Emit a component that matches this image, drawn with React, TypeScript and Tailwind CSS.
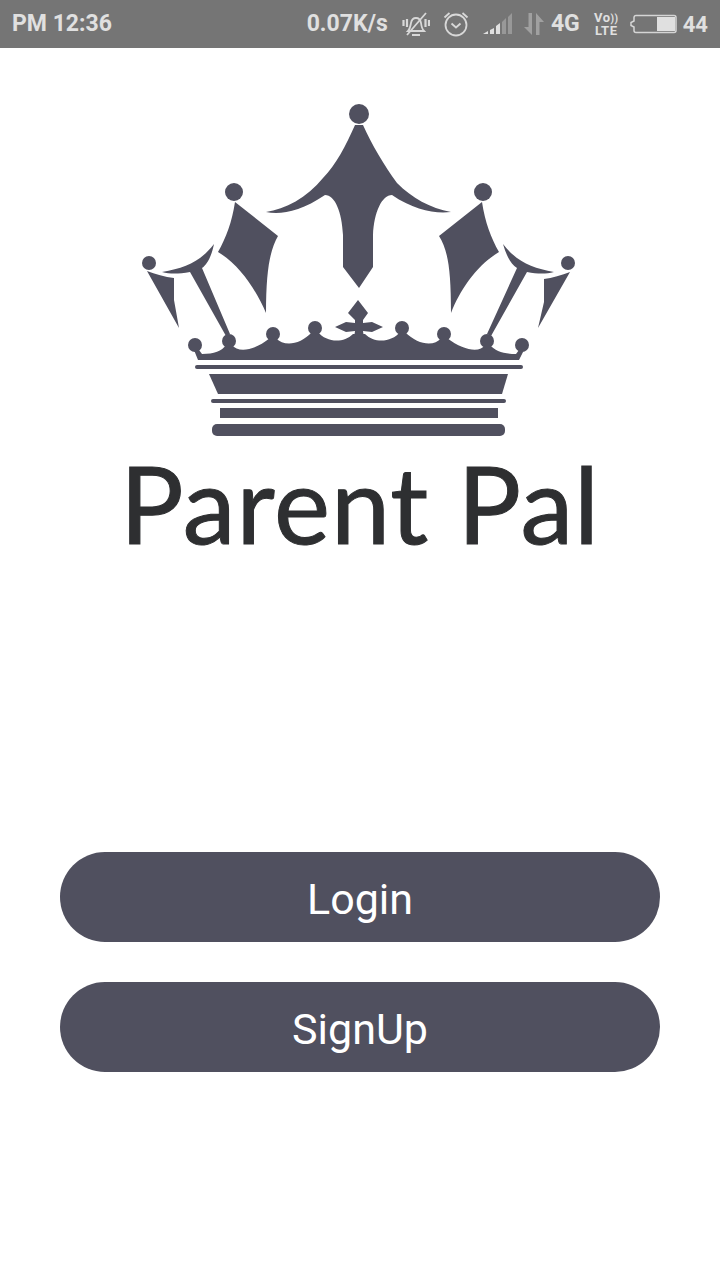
import React from 'react';

function StatusIcons() {
	return (
		<>
			<svg className="ml-[14px] h-[28px] w-[28px]" viewBox="0 0 28 28" fill="none" stroke="#d8d8d8" strokeWidth="1.800">
				<path d="M6 21c2-2 2.500-5 3-8 .5-3 2.500-5 5-5s4.500 2 5 5c.4 3 1 6 3 8z" />
				<path d="M10 25h8M5 25 24 3" />
				<path d="M5 9v8M1.500 10v6M23.500 9v8M27 10v6" strokeWidth="2.200" />
			</svg>
			<svg className="ml-[13px] h-[28px] w-[26px]" viewBox="0 0 26 28" fill="none" stroke="#d8d8d8" strokeWidth="1.800">
				<circle cx="13" cy="15" r="10.500" />
				<path d="m8.500 13.500 4.500 4 4.500-4M1.500 7.500 6.500 3M24.500 7.500 19.500 3" />
			</svg>
			<svg className="ml-[13px] h-[24px] w-[31px]" viewBox="0 0 31 24">
				<path d="M1 22h5v-3z" fill="#e0e0e0" />
				<path d="M8 18l4-2v6H8zM14 14l4-3v11h-4z" fill="#e0e0e0" />
				<path d="M20 10l4-4v16h-4zM26 5l4-4v21h-4z" fill="#989898" />
			</svg>
			<svg className="ml-[10px] h-[24px] w-[22px]" viewBox="0 0 22 24" fill="#a0a0a0">
				<path d="M9 1v22L1 15h4.500V1zM13 23V1l8 9h-4.500v13z" />
			</svg>
			<span className="ml-[6px] text-[23px] font-bold">4G</span>
			<div className="ml-[14px] flex w-[25px] flex-col items-center text-[13px] leading-[12px] font-bold tracking-[0.5px]">
				<span>Vo<span className="text-[10px]">))</span></span>
				<span>LTE</span>
			</div>
			<svg className="ml-[11px] h-[20px] w-[47px]" viewBox="0 0 47 20">
				<path d="M6 1.500h38a2 2 0 0 1 2 2v13a2 2 0 0 1-2 2H6a2 2 0 0 1-2-2V13L1 11.500v-3L4 7V3.500a2 2 0 0 1 2-2z" fill="none" stroke="#d5d5d5" strokeWidth="1.500" />
				<rect x="27" y="3" width="18" height="14" fill="#e0e0e0" />
			</svg>
			<span className="ml-[6px] text-[22px] font-bold">44</span>
		</>
	);
}

function Crown() {
	return (
		<svg className="mt-[47px] block h-[350px] w-[460px]" viewBox="130 95 460 350" fill="#50505f">
			<circle cx="359" cy="114" r="10" />
			<path d="M355 125 C346 145 336 165 323 178 C307 198 285 209 266 212 C280 215 300 212 325 195 C335 195 342 212 343 235 L343 267 L359 288 L373 267 L373 235 C374 212 382 195 392 195 C414 210 435 214 451 212 C430 208 412 198 397 183 C384 165 372 145 363 125 Z" />

			<circle cx="234" cy="192" r="9" />
			<path d="M235 202 L278 236 C270 250 266 270 266 313 C256 290 240 265 218 252 C226 238 232 222 235 202 Z" />
			<circle cx="483" cy="192" r="9" />
			<path d="M482 202 L439 236 C448 250 451 270 451 313 C460 290 477 265 499 252 C491 238 485 222 482 202 Z" />

			<path d="M214 244 C200 262 185 268 162 272 C170 274 178 274 190 272 L226 336 L230 334 L202 268 C208 264 212 254 214 244 Z" />
			<path d="M503 244 C517 262 532 268 554 272 C546 274 538 274 527 272 L491 336 L487 334 L517 268 C510 264 506 254 503 244 Z" />

			<circle cx="149" cy="263" r="7" />
			<path d="M147 271 C155 274 165 277 174 278 L174 300 L179 328 Z" />
			<circle cx="568" cy="263" r="7" />
			<path d="M570 272 C562 275 552 278 544 279 L544 302 L538 328 Z" />

			{[195, 229, 273, 315, 402, 444, 487, 522].map((x, i) => (
				<circle key={x} cx={x} cy={[345, 341, 334, 328, 328, 334, 341, 345][i]} r="7" />
			))}
			<path d="M358 300 L368 313 L363 320 L363 323 L372 322 L383 327 L372 332 L363 331 L364 338 L354 338 L355 331 L346 332 L335 327 L346 322 L355 323 L355 320 L348 313 Z" />
			<path d="M194 350 L199 350 L202 354 C214 354 222 351 226 345 L232 345 C238 353 254 351 270 338 L276 338 C284 347 300 345 312 332 L318 332 C326 342 343 344 353 334 L365 334 C375 344 392 342 400 332 L405 332 C418 345 434 347 441 338 L447 338 C464 351 480 353 485 345 L490 345 C495 351 504 354 516 354 L519 350 L524 350 L519 360 L198 360 Z" />

			<rect x="195" y="365" width="328" height="4" rx="2" />
			<path d="M209 374 L508 374 L502 394 L218 394 Z" />
			<rect x="211" y="399" width="295" height="4" rx="2" />
			<rect x="220" y="408" width="278" height="10" />
			<rect x="212" y="424" width="293" height="12" rx="5" />
		</svg>
	);
}

export default function App() {
	return (
		<div className="flex h-[1280px] w-[720px] flex-col items-center overflow-hidden bg-white font-['Roboto',sans-serif]">
			<div className="flex h-12 w-full items-center bg-[#757575] px-3 text-[#e0e0e0]">
				<span className="text-[23px] font-bold">PM 12:36</span>
				<div className="ml-auto flex items-center">
					<span className="text-[23px] font-bold">0.07K/s</span>
					<StatusIcons />
				</div>
			</div>

			<Crown />

			<h1 className="h-[117px] font-['Lato',sans-serif] text-[106px] leading-[117px] font-normal tracking-[1px] whitespace-nowrap text-[#2e2f31] [-webkit-text-stroke:1px_#2e2f31]">
				Parent Pal
			</h1>

			<div className="mt-[290px] flex w-[600px] flex-col gap-10">
				<button className="h-[90px] rounded-full bg-[#50505f] pt-1 text-[43px] text-white">
					Login
				</button>
				<button className="h-[90px] rounded-full bg-[#50505f] pt-1 text-[43px] text-white">
					SignUp
				</button>
			</div>
		</div>
	);
}
